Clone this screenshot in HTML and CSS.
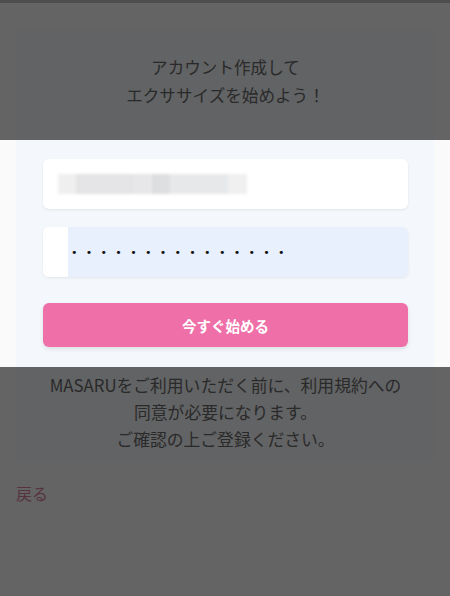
FILE: index.html
```html
<!DOCTYPE html>
<html lang="ja">
<head>
<meta charset="utf-8">
<title>アカウント作成</title>
<link rel="stylesheet" href="styles.css">
</head>
<body>
<div class="page">
  <div class="topline"></div>
  <main class="card">
    <p class="lead">アカウント作成して<br>エクササイズを始めよう！</p>
    <form class="form">
      <div class="field">
        <div class="blurred">
          <span class="b b1"></span><span class="b b2"></span><span class="b b3"></span><span class="b b4"></span><span class="b b5"></span><span class="b b6"></span>
        </div>
      </div>
      <div class="field field-pass">
        <span class="pass-left"></span>
        <span class="pass-fill"><span class="dots">•••••••••••••••</span></span>
      </div>
      <button type="button" class="btn">今すぐ始める</button>
    </form>
    <p class="notice">MASARUをご利用いただく前に、利用規約への<br>同意が必要になります。<br>ご確認の上ご登録ください。</p>
  </main>
  <a class="back">戻る</a>
  <div class="shade shade-top"></div>
  <div class="shade shade-bottom"></div>
</div>
</body>
</html>
```
FILE: styles.css
```css
html, body {
  margin: 0;
  padding: 0;
}
body {
  background: #fafafa;
  font-family: "Noto Sans CJK JP", "Noto Sans", sans-serif;
  color: #6f6f6f;
  width: 450px;
  height: 596px;
  overflow: hidden;
}
.page {
  position: relative;
  width: 450px;
  height: 596px;
}
.topline {
  height: 3px;
  background: #c4c4c4;
}
.card {
  margin: 27px 16px 0;
  background: #f4f7fb;
  padding: 23px 26px 9px 27px;
}
.lead {
  margin: 0;
  text-align: center;
  font-size: 16.6px;
  line-height: 28px;
  color: #6a6a6a;
}
.form {
  margin-top: 50px;
  display: flex;
  flex-direction: column;
}
.field {
  height: 50px;
  border-radius: 6px;
  background: #ffffff;
  box-shadow: 0 1px 3px rgba(0, 0, 0, 0.08);
  display: flex;
  align-items: center;
  overflow: hidden;
}
.field + .field {
  margin-top: 18px;
}
.blurred {
  margin-left: 15px;
  display: flex;
  height: 20px;
  filter: blur(1.5px);
}
.b {
  height: 20px;
  display: block;
}
.b1 { width: 18px; background: #efefef; }
.b2 { width: 58px; background: #e4e4e6; }
.b3 { width: 18px; background: #e7e7e9; }
.b4 { width: 18px; background: #dcdee0; }
.b5 { width: 58px; background: #e7e8ea; }
.b6 { width: 19px; background: #f0f0f0; }
.field-pass {
  align-items: stretch;
}
.pass-left {
  width: 25px;
  background: #ffffff;
}
.pass-fill {
  flex: 1;
  background: #e8f0fe;
  display: flex;
  align-items: center;
  padding-left: 3px;
}
.dots {
  font-family: "DejaVu Sans", sans-serif;
  font-size: 11px;
  letter-spacing: 8.3px;
  color: #111;
  line-height: 1;
}
.btn {
  margin-top: 26px;
  height: 44px;
  border: none;
  border-radius: 6px;
  background: #ef70a9;
  color: #ffffff;
  font-family: "Noto Sans CJK JP", sans-serif;
  font-size: 14.5px;
  font-weight: 700;
  box-shadow: 0 2px 4px rgba(0, 0, 0, 0.1);
  padding: 0;
}
.notice {
  margin: 25px -10px 0;
  text-align: center;
  font-size: 16.8px;
  line-height: 27px;
  white-space: nowrap;
  color: #6a6a6a;
}
.back {
  display: block;
  margin: 19px 0 0 16px;
  font-size: 16px;
  line-height: 24px;
  color: #d9819f;
}
.shade {
  position: absolute;
  left: 0;
  right: 0;
  background: rgba(0, 0, 0, 0.6);
}
.shade-top {
  top: 0;
  height: 140px;
}
.shade-bottom {
  top: 367px;
  bottom: 0;
}
```
